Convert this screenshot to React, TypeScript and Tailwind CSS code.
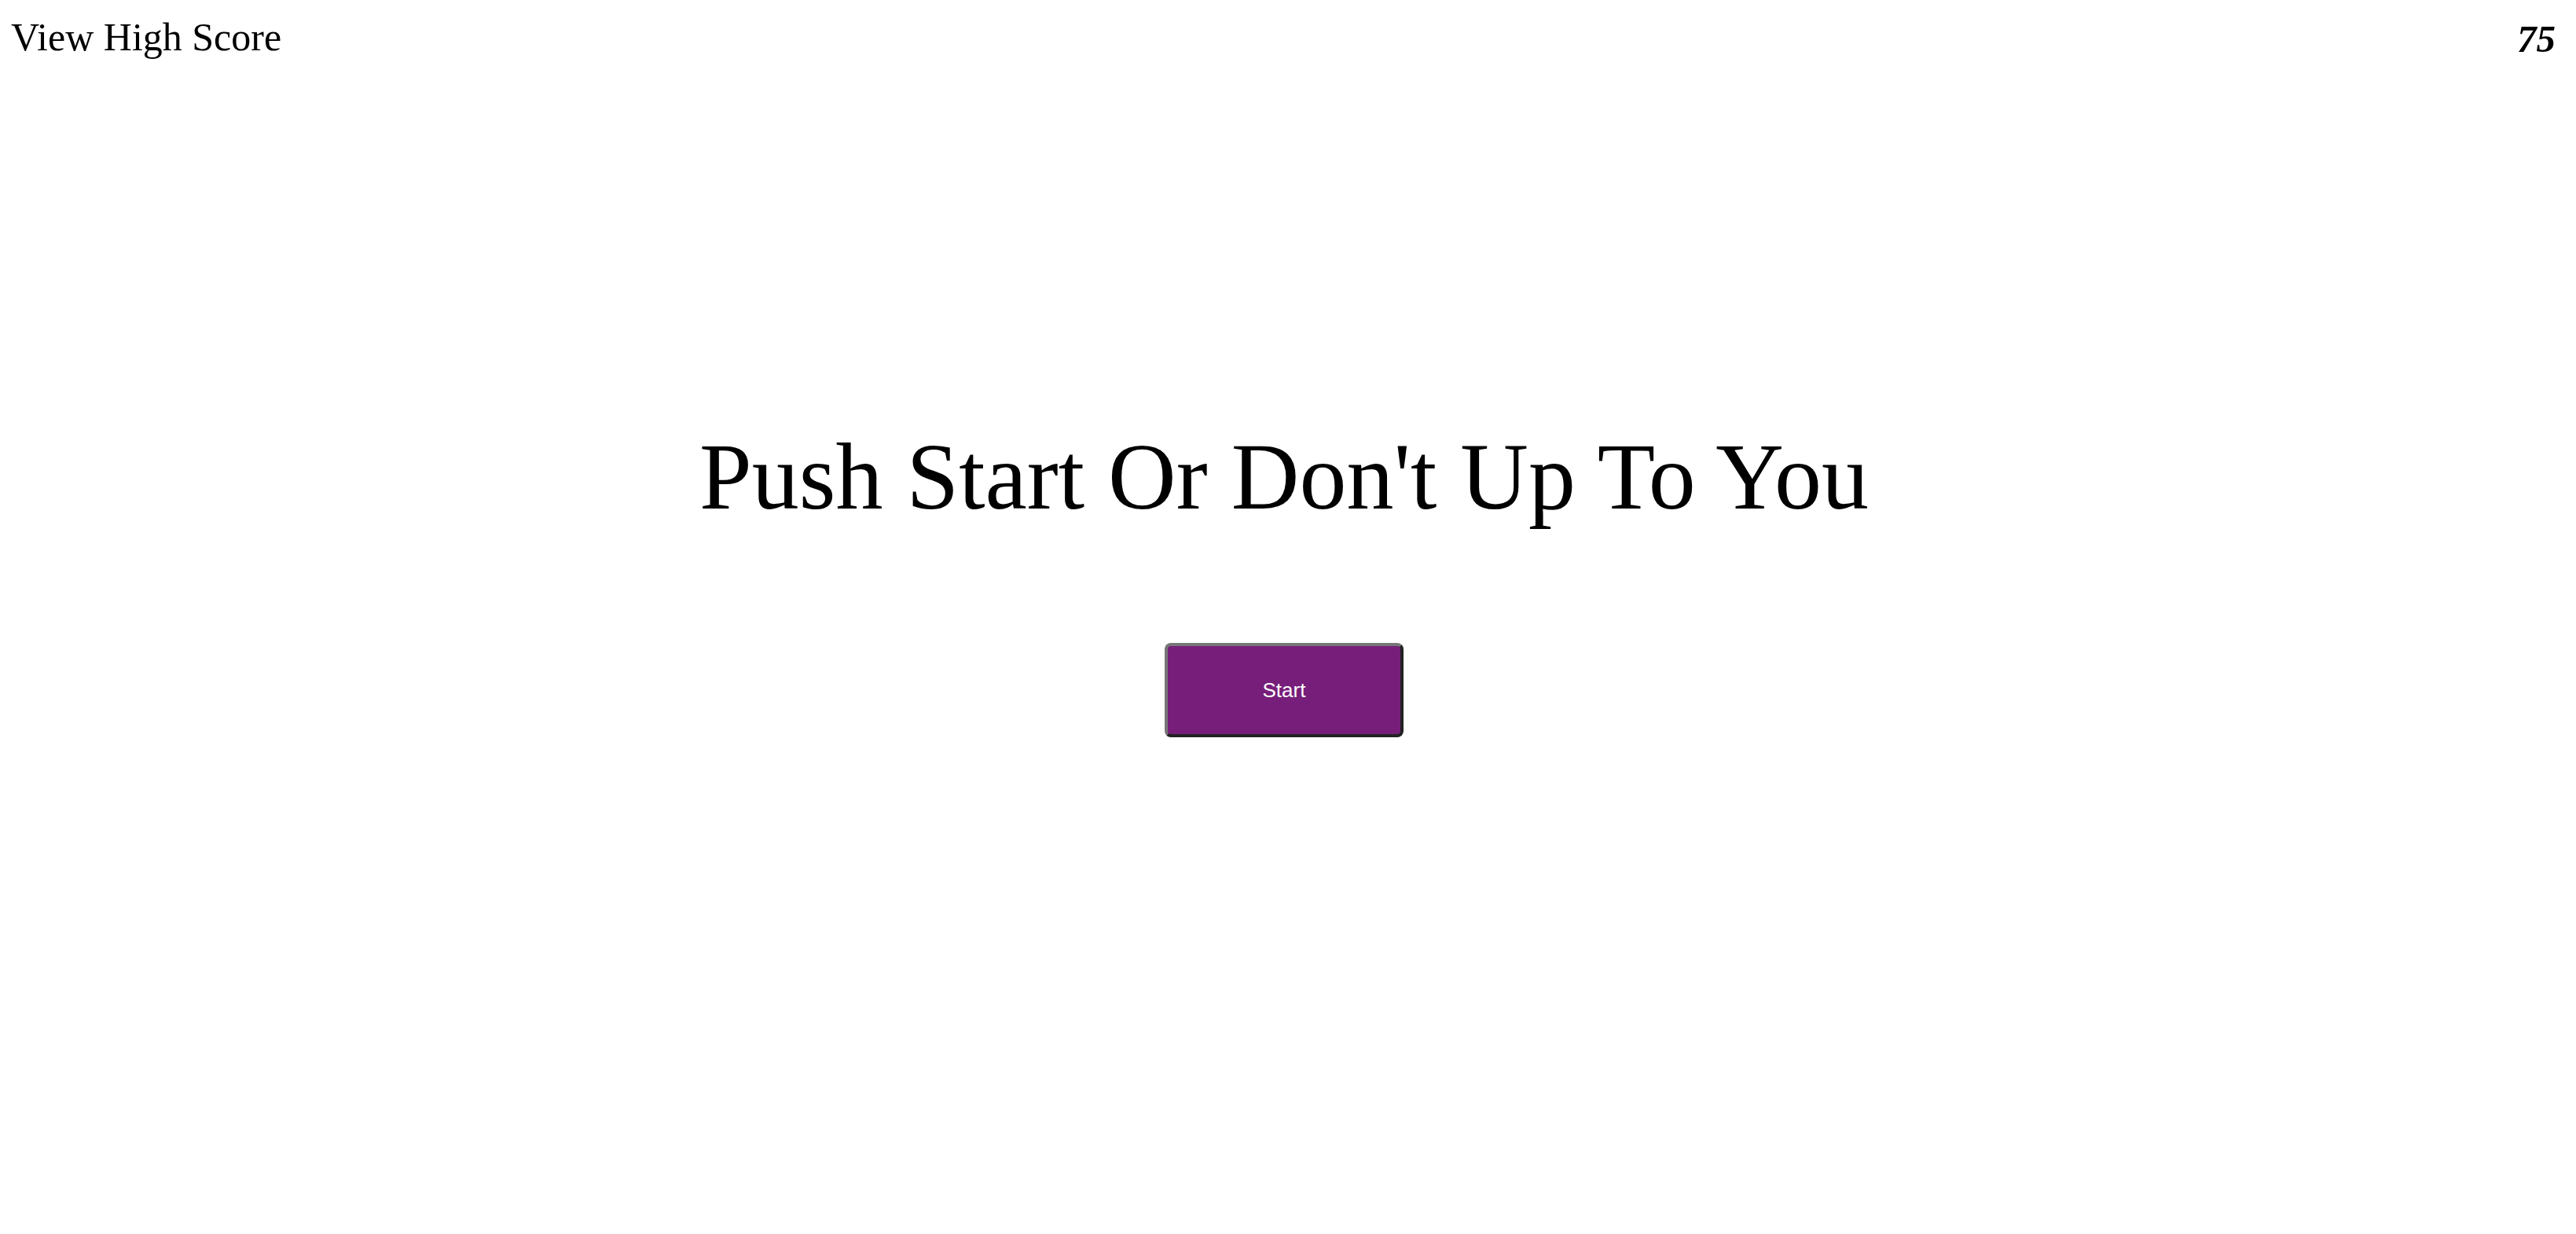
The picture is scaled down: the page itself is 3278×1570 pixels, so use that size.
export default function App() {
  return (
    <div className="min-h-screen w-full bg-white text-black font-['Liberation_Serif','Times_New_Roman',serif]">
      <div className="flex items-start justify-between pl-[14px] pr-[26px] pt-[20px]">
        <a className="text-[50px] leading-[1.107] cursor-pointer">View High Score</a>
        <div className="mt-[3px] text-[49px] font-bold italic leading-[1.107]">75</div>
      </div>
      <div className="flex flex-col items-center pr-[10px]">
        <h1 className="mt-[464px] text-[120px] font-normal leading-[1.107] whitespace-nowrap">
          Push Start Or Don't Up To You
        </h1>
        <button className="mt-[144px] flex h-[120px] w-[304px] items-center justify-center rounded-[8px] border-4 border-t-[#767676] border-l-[#767676] border-b-[#222222] border-r-[#222222] bg-[#771e7a] font-['Liberation_Sans',Arial,sans-serif] text-[26px] text-white">
          Start
        </button>
      </div>
    </div>
  );
}
